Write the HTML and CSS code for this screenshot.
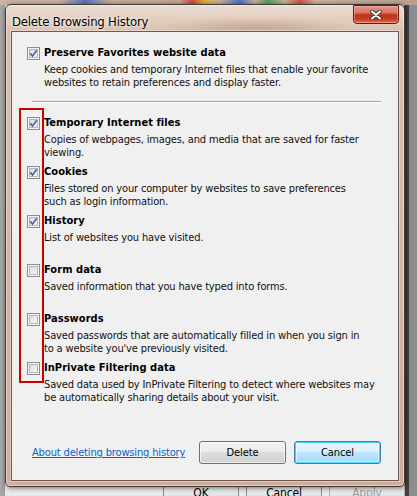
FILE: index.html
```html
<!DOCTYPE html>
<html>
<head>
<meta charset="utf-8">
<title>Delete Browsing History</title>
<link rel="stylesheet" href="styles.css">
</head>
<body>
<div class="desktop">
  <div class="parent-window">
    <div class="parent-buttons">
      <div class="pbtn">OK</div>
      <div class="pbtn">Cancel</div>
      <div class="pbtn disabled">Apply</div>
    </div>
  </div>

  <div class="dialog">
    <div class="titlebar">
      <span class="title">Delete Browsing History</span>
      <div class="close">
        <svg width="12" height="10" viewBox="0 0 12 10">
          <path d="M2 1.5 L10 8.5 M10 1.5 L2 8.5" stroke="#3a3a3a" stroke-width="3.8" stroke-linecap="round" fill="none"/>
          <path d="M2 1.5 L10 8.5 M10 1.5 L2 8.5" stroke="#ffffff" stroke-width="2" stroke-linecap="round" fill="none"/>
        </svg>
      </div>
    </div>

    <div class="client">
      <div class="item first">
        <span class="cb checked"><svg width="9" height="9" viewBox="0 0 9 9"><path d="M1.2 4.4 L3.5 7 L7.8 1.2" stroke="#4b5f9e" stroke-width="1.6" fill="none"/></svg></span>
        <div class="label">Preserve Favorites website data</div>
        <div class="desc">Keep cookies and temporary Internet files that enable your favorite<br>websites to retain preferences and display faster.</div>
      </div>

      <div class="sep"></div>

      <div class="group">
        <div class="redbox"></div>
        <div class="item">
          <span class="cb checked"><svg width="9" height="9" viewBox="0 0 9 9"><path d="M1.2 4.4 L3.5 7 L7.8 1.2" stroke="#4b5f9e" stroke-width="1.6" fill="none"/></svg></span>
          <div class="label">Temporary Internet files</div>
          <div class="desc">Copies of webpages, images, and media that are saved for faster<br>viewing.</div>
        </div>
        <div class="item">
          <span class="cb checked"><svg width="9" height="9" viewBox="0 0 9 9"><path d="M1.2 4.4 L3.5 7 L7.8 1.2" stroke="#4b5f9e" stroke-width="1.6" fill="none"/></svg></span>
          <div class="label">Cookies</div>
          <div class="desc">Files stored on your computer by websites to save preferences<br>such as login information.</div>
        </div>
        <div class="item">
          <span class="cb checked"><svg width="9" height="9" viewBox="0 0 9 9"><path d="M1.2 4.4 L3.5 7 L7.8 1.2" stroke="#4b5f9e" stroke-width="1.6" fill="none"/></svg></span>
          <div class="label">History</div>
          <div class="desc">List of websites you have visited.</div>
        </div>
        <div class="item">
          <span class="cb"></span>
          <div class="label">Form data</div>
          <div class="desc">Saved information that you have typed into forms.</div>
        </div>
        <div class="item">
          <span class="cb"></span>
          <div class="label">Passwords</div>
          <div class="desc">Saved passwords that are automatically filled in when you sign in<br>to a website you've previously visited.</div>
        </div>
        <div class="item">
          <span class="cb"></span>
          <div class="label">InPrivate Filtering data</div>
          <div class="desc">Saved data used by InPrivate Filtering to detect where websites may<br>be automatically sharing details about your visit.</div>
        </div>
      </div>

      <div class="footer">
        <a class="link" href="#">About deleting browsing history</a>
        <div class="buttons">
          <button class="btn">Delete</button>
          <button class="btn default">Cancel</button>
        </div>
      </div>
    </div>
  </div>
</div>
</body>
</html>
```

FILE: styles.css
```css
* { box-sizing: border-box; }

html, body {
  margin: 0;
  padding: 0;
}

body {
  width: 417px;
  height: 496px;
  overflow: hidden;
  font-family: "DejaVu Sans Condensed", "DejaVu Sans", sans-serif;
  font-size: 11px;
  letter-spacing: -0.15px;
  color: #000;
  background: #7a7a7a;
}

.desktop {
  position: relative;
  width: 417px;
  height: 496px;
  overflow: hidden;
}

/* window lying behind the dialog */
.parent-window {
  height: 496px;
  display: flex;
  flex-direction: column;
  justify-content: flex-end;
  background:
    linear-gradient(to right, #c9b3a4 0, #cdb1a0 60px, #5a73c0 85px, #c8ab98 110px, #c4a48f 180px, #d04a3a 192px, #d9b23c 205px, #c9ae9b 220px, #4f74c8 240px, #c9ae9b 255px, #52a45a 268px, #c9ae9b 285px, #d35444 300px, #c9ae9b 315px, #b9a090 417px) top / 100% 5px no-repeat,
    linear-gradient(to right, #a9a9a9 0, #9c9c9c 5px, #e9e9e9 5px, #e9e9e9 404px, #3d3d3d 404px, #454545 409px, #8d8d8d 409px);
}

.parent-buttons {
  display: flex;
  justify-content: flex-end;
  gap: 7px;
  padding: 0 12px 0 0;
  margin-bottom: -9px;
}

.pbtn {
  width: 76px;
  height: 24px;
  border: 1px solid #8a8a8a;
  border-radius: 3px;
  background: linear-gradient(#f2f2f2, #dcdcdc);
  display: flex;
  align-items: center;
  justify-content: center;
  color: #000;
  font-size: 12px;
}

.pbtn.disabled { color: #a0a0a0; border-color: #b5b5b5; }

/* the dialog window */
.dialog {
  position: absolute;
  left: 5px;
  top: 4px;
  width: 400px;
  height: 483px;
  display: flex;
  flex-direction: column;
  padding: 0 5px 5px 5px;
  border: 1px solid #3e3a38;
  border-radius: 6px 6px 5px 5px;
  background:
    linear-gradient(to bottom, rgba(255,255,255,0.3), rgba(255,255,255,0) 26px),
    radial-gradient(ellipse 90px 10px at 250px 22px, rgba(150,110,90,0.35), rgba(150,110,90,0)),
    linear-gradient(to bottom, #e2cdbf 0, #d9bdab 30px, #d2ad97 100%);
  box-shadow: 1px 1px 5px rgba(0,0,0,0.55), inset 0 0 0 1px rgba(255,255,255,0.45);
}

.titlebar {
  height: 26px;
  display: flex;
  justify-content: space-between;
  align-items: flex-start;
  padding-left: 1px;
}

.title {
  font-family: "DejaVu Sans Condensed", sans-serif;
  font-size: 13px;
  line-height: 14px;
  margin-top: 10px;
  letter-spacing: -0.2px;
  color: #000;
  text-shadow: 0 0 6px rgba(255,255,255,0.9), 0 0 3px rgba(255,255,255,0.9);
}

.close {
  width: 46px;
  height: 19px;
  border: 1px solid #5e1d10;
  border-radius: 0 0 4px 4px;
  background: linear-gradient(to bottom, #e5978a 0, #d8735f 40%, #c2321a 52%, #c63c22 78%, #e07456 100%);
  box-shadow: inset 0 0 0 1px rgba(255,200,190,0.45);
  display: flex;
  align-items: center;
  justify-content: center;
}

.client {
  flex: 1;
  display: flex;
  flex-direction: column;
  border: 1px solid #6b5a51;
  background: #f0f0f0;
  padding: 14px 17px 0 15px;
  box-shadow: 0 0 0 1px rgba(255,255,255,0.35);
}

.item {
  display: grid;
  grid-template-columns: 13px 1fr;
  column-gap: 4px;
  align-content: start;
}

.cb {
  grid-row: 1;
  grid-column: 1;
  width: 13px;
  height: 13px;
  margin-top: 1px;
  border: 1px solid #8e8f8f;
  background: linear-gradient(135deg, #cfd1d4 0, #e9e9ea 50%, #fafafa 100%);
  box-shadow: inset 0 0 0 1px #f4f4f4, inset 0 0 0 2px #b4b8be;
  display: flex;
  align-items: center;
  justify-content: center;
}

.label {
  grid-row: 1;
  grid-column: 2;
  font-weight: bold;
  line-height: 14px;
  letter-spacing: 0.05px;
  white-space: nowrap;
}

.desc {
  grid-row: 2;
  grid-column: 2;
  line-height: 13px;
  margin-top: 3px;
  color: #111;
  white-space: nowrap;
}

.sep {
  height: 2px;
  margin: 12px 0 13px 5px;
  border-top: 1px solid #a0a0a0;
  border-bottom: 1px solid #ffffff;
}

.group {
  position: relative;
  display: grid;
  grid-auto-rows: 49px;
}

.redbox {
  position: absolute;
  left: -8px;
  top: -8px;
  width: 25px;
  height: 275px;
  border: 2px solid #cc0000;
}

.footer {
  display: flex;
  justify-content: space-between;
  align-items: center;
  margin-top: 31px;
  padding-left: 5px;
}

.link {
  color: #0066cc;
  text-decoration: underline;
  line-height: 13px;
}

.buttons {
  display: flex;
  gap: 8px;
}

.btn {
  width: 87px;
  height: 23px;
  padding: 0;
  font-family: "DejaVu Sans Condensed", sans-serif;
  font-size: 11px;
  letter-spacing: -0.1px;
  color: #000;
  border: 1px solid #707070;
  border-radius: 3px;
  background: linear-gradient(to bottom, #f2f2f2 0, #ebebeb 50%, #dddddd 50%, #cfcfcf 100%);
  box-shadow: inset 0 0 0 1px rgba(255,255,255,0.7);
}

.btn.default {
  border-color: #3c7fb1;
  background: linear-gradient(to bottom, #eaf6fd 0, #d9f0fc 50%, #bee6fd 50%, #a7d9f5 100%);
  box-shadow: inset 0 0 0 1px #48d0f8, inset 0 0 0 2px rgba(255,255,255,0.5);
}
```
